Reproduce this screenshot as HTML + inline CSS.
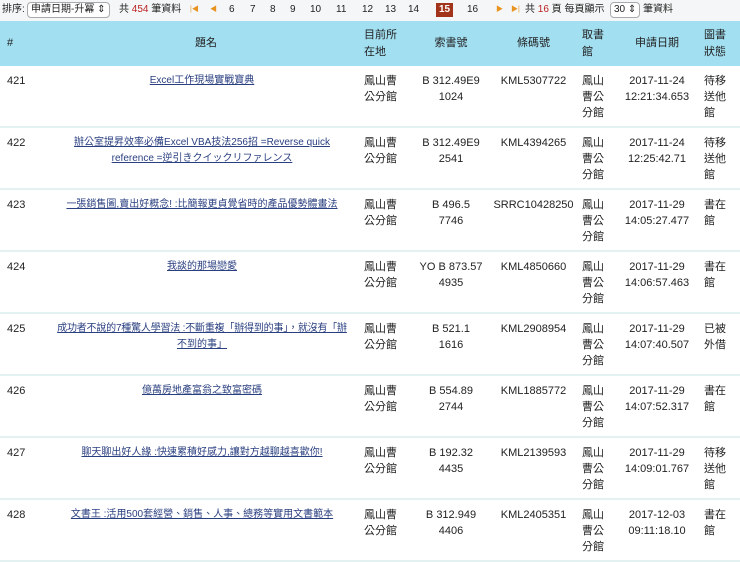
<!DOCTYPE html>
<html><head><meta charset="utf-8"><style>
body{margin:0;width:740px;height:526px;overflow:hidden;background:#fff;font-family:"Liberation Sans","Noto Sans CJK TC",sans-serif;font-size:11px;color:#222}
.top{height:21px;background:#f4f6f7;position:relative;white-space:nowrap;font-size:10px}
.top>span{position:absolute;top:3px;line-height:14px}
.sel{border:1px solid #aaa;border-radius:4px;background:#fff;padding:0 3px;top:2px!important;height:14px;font-size:10px}
.r{color:#b22}
.o{color:#e8931f;font-size:7px}
.cur{background:#a3341c;color:#fff;font-weight:bold;padding:0 3px}
table{border-collapse:collapse;table-layout:fixed;width:740px}
th{background:#a2dff1;height:45px;font-weight:normal;font-size:11px;line-height:17px;padding:0 0 0 7px;text-align:left}
td{vertical-align:top;padding:7px 0 0 7px;line-height:16px;height:53px;border-bottom:2px solid #e3f1f0}
.c{text-align:center;padding-left:0}
td.t{font-size:10px;padding:7px 8px 0 0}
a{color:#2a3f80;text-decoration:underline}
</style></head><body>
<div class="top">
<span style="left:2px">排序:</span>
<span class="sel" style="left:27px">申請日期-升冪 ⇕</span>
<span style="left:119px">共 <span class="r">454</span> 筆資料</span>
<span class="o" style="left:190px">|◀</span><span class="o" style="left:210px">◀</span>
<span style="left:229px">6</span><span style="left:250px">7</span><span style="left:270px">8</span><span style="left:290px">9</span>
<span style="left:310px">10</span><span style="left:336px">11</span><span style="left:362px">12</span><span style="left:385px">13</span><span style="left:408px">14</span>
<span class="cur" style="left:436px">15</span>
<span style="left:467px">16</span>
<span class="o" style="left:496px">▶</span><span class="o" style="left:511px">▶|</span>
<span style="left:525px">共 <span class="r">16</span> 頁 每頁顯示</span>
<span class="sel" style="left:610px">30 ⇕</span>
<span style="left:643px">筆資料</span>
</div>
<table>
<colgroup><col style="width:55px"><col style="width:302px"><col style="width:53px"><col style="width:82px"><col style="width:83px"><col style="width:42px"><col style="width:80px"><col style="width:43px"></colgroup>
<tr><th>#</th><th class="c">題名</th><th>目前所<br>在地</th><th class="c">索書號</th><th class="c">條碼號</th><th>取書<br>館</th><th class="c">申請日期</th><th>圖書<br>狀態</th></tr>
<tr><td>421</td><td class="c t"><a>Excel工作現場實戰寶典</a></td><td>鳳山曹<br>公分館</td><td class="c">B 312.49E9<br>1024</td><td class="c">KML5307722</td><td>鳳山<br>曹公<br>分館</td><td class="c">2017-11-24<br>12:21:34.653</td><td>待移<br>送他<br>館</td></tr>
<tr><td>422</td><td class="c t"><a>辦公室提昇效率必備Excel VBA技法256招 =Reverse quick reference =逆引きクイックリファレンス</a></td><td>鳳山曹<br>公分館</td><td class="c">B 312.49E9<br>2541</td><td class="c">KML4394265</td><td>鳳山<br>曹公<br>分館</td><td class="c">2017-11-24<br>12:25:42.71</td><td>待移<br>送他<br>館</td></tr>
<tr><td>423</td><td class="c t"><a>一張銷售圖,賣出好概念! :比簡報更貞覺省時的產品優勢體畫法</a></td><td>鳳山曹<br>公分館</td><td class="c">B 496.5<br>7746</td><td class="c">SRRC10428250</td><td>鳳山<br>曹公<br>分館</td><td class="c">2017-11-29<br>14:05:27.477</td><td>書在<br>館</td></tr>
<tr><td>424</td><td class="c t"><a>我談的那場戀愛</a></td><td>鳳山曹<br>公分館</td><td class="c">YO B 873.57<br>4935</td><td class="c">KML4850660</td><td>鳳山<br>曹公<br>分館</td><td class="c">2017-11-29<br>14:06:57.463</td><td>書在<br>館</td></tr>
<tr><td>425</td><td class="c t"><a><span style="white-space:nowrap;letter-spacing:-0.2px">成功者不說的7種驚人學習法 :不斷重複「辦得到的事」，就沒有「辦</span><br>不到的事」</a></td><td>鳳山曹<br>公分館</td><td class="c">B 521.1<br>1616</td><td class="c">KML2908954</td><td>鳳山<br>曹公<br>分館</td><td class="c">2017-11-29<br>14:07:40.507</td><td>已被<br>外借</td></tr>
<tr><td>426</td><td class="c t"><a>億萬房地產富翁之致富密碼</a></td><td>鳳山曹<br>公分館</td><td class="c">B 554.89<br>2744</td><td class="c">KML1885772</td><td>鳳山<br>曹公<br>分館</td><td class="c">2017-11-29<br>14:07:52.317</td><td>書在<br>館</td></tr>
<tr><td>427</td><td class="c t"><a>聊天聊出好人緣 :快速累積好感力,讓對方越聊越喜歡你!</a></td><td>鳳山曹<br>公分館</td><td class="c">B 192.32<br>4435</td><td class="c">KML2139593</td><td>鳳山<br>曹公<br>分館</td><td class="c">2017-11-29<br>14:09:01.767</td><td>待移<br>送他<br>館</td></tr>
<tr><td>428</td><td class="c t"><a>文書王 :活用500套經營、銷售、人事、總務等實用文書範本</a></td><td>鳳山曹<br>公分館</td><td class="c">B 312.949<br>4406</td><td class="c">KML2405351</td><td>鳳山<br>曹公<br>分館</td><td class="c">2017-12-03<br>09:11:18.10</td><td>書在<br>館</td></tr>
</table>
</body></html>
